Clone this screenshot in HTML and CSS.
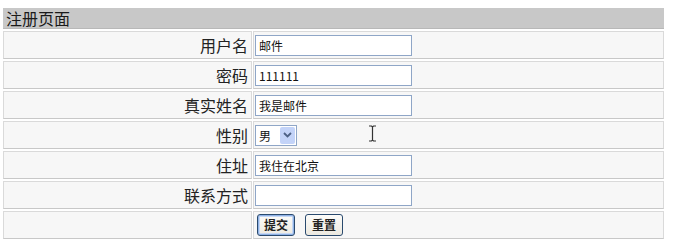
FILE: index.html
```html
<!DOCTYPE html>
<html lang="zh">
<head>
<meta charset="utf-8">
<title>注册页面</title>
<link rel="stylesheet" href="styles.css">
</head>
<body>
<div class="page">
  <div class="title">注册页面</div>
  <form class="form">
    <div class="row">
      <label class="lab">用户名</label>
      <div class="val"><input class="txt" type="text" value="邮件"></div>
    </div>
    <div class="row">
      <label class="lab">密码</label>
      <div class="val"><input class="txt" type="text" value="111111"></div>
    </div>
    <div class="row">
      <label class="lab">真实姓名</label>
      <div class="val"><input class="txt" type="text" value="我是邮件"></div>
    </div>
    <div class="row">
      <label class="lab">性别</label>
      <div class="val">
        <span class="sel">
          <select class="sel-in"><option>男</option><option>女</option></select>
          <span class="sel-btn"><svg width="9" height="6" viewBox="0 0 9 6"><path d="M1 1 L4.5 4.5 L8 1" fill="none" stroke="#4d6185" stroke-width="1.8"/></svg></span>
        </span>
        <span class="cursor"><svg width="9" height="17" viewBox="0 0 9 17"><path d="M1 1 H3.5 L4.5 2 L5.5 1 H8 M4.5 2 V15 M1 16 H3.5 L4.5 15 L5.5 16 H8" fill="none" stroke="#333" stroke-width="1.2"/></svg></span>
      </div>
    </div>
    <div class="row">
      <label class="lab">住址</label>
      <div class="val"><input class="txt" type="text" value="我住在北京"></div>
    </div>
    <div class="row">
      <label class="lab">联系方式</label>
      <div class="val"><input class="txt" type="text" value=""></div>
    </div>
    <div class="row">
      <div class="lab"></div>
      <div class="val btns">
        <button class="btn btn-def" type="button">提交</button>
        <button class="btn" type="button">重置</button>
      </div>
    </div>
  </form>
</div>
</body>
</html>
```
FILE: styles.css
```css
html, body {
  margin: 0;
  padding: 0;
  background: #ffffff;
}
body {
  font-family: "Noto Sans CJK SC", "Liberation Sans", sans-serif;
  color: #222;
}
.page {
  padding: 8px 0 0 3px;
  width: 661px;
}
.title {
  height: 21px;
  background: #c8c8c8;
  font-size: 16px;
  line-height: 21px;
  padding-left: 3px;
  color: #1a1a1a;
  border-bottom: 1px solid #b8b8b8;
  box-sizing: border-box;
}
.form {
  display: flex;
  flex-direction: column;
  gap: 2px;
  padding-top: 2px;
}
.row {
  display: grid;
  grid-template-columns: 249px 1fr;
  gap: 1px;
  height: 28px;
}
.lab, .val {
  background: #f7f7f7;
  border: 1px solid #dadada;
  border-bottom-color: #c8c8c8;
  box-sizing: border-box;
  display: flex;
  align-items: center;
  position: relative;
}
.lab {
  justify-content: flex-end;
  padding-right: 3px;
  font-size: 16px;
  color: #222;
}
.val {
  padding-left: 1px;
}
.txt {
  width: 157px;
  height: 21px;
  box-sizing: border-box;
  border: 1px solid #8fa6c7;
  background: #fff;
  font-family: "Noto Sans CJK SC", "Liberation Sans", sans-serif;
  font-size: 12px;
  padding: 0 3px;
  margin: 0;
  color: #111;
  outline: none;
}
.sel {
  display: inline-flex;
  align-items: center;
  height: 21px;
  width: 42px;
  box-sizing: border-box;
  border: 1px solid #8fa6c7;
  background: #fff;
}
.sel-in {
  appearance: none;
  -webkit-appearance: none;
  border: none;
  background: transparent;
  font-family: "Noto Sans CJK SC", sans-serif;
  font-size: 12px;
  padding: 0 0 0 3px;
  margin: 0;
  width: 23px;
  height: 19px;
  outline: none;
  color: #111;
}
.sel-btn {
  width: 15px;
  height: 17px;
  margin-left: 1px;
  background: #c3d3f8;
  border-radius: 2px;
  display: flex;
  align-items: center;
  justify-content: center;
}
.cursor {
  position: absolute;
  left: 114px;
  top: 3px;
  display: block;
  line-height: 0;
}
.btns {
  gap: 10px;
  padding-left: 3px;
}
.btn {
  height: 22px;
  width: 38px;
  box-sizing: border-box;
  border: 1px solid #2a4a6e;
  border-radius: 3px;
  background: linear-gradient(#fcfcfa, #ece9e0);
  font-family: "Noto Sans CJK SC", sans-serif;
  font-size: 12px;
  font-weight: bold;
  color: #222;
  padding: 0;
  margin: 0;
  line-height: 20px;
}
.btn-def {
  box-shadow: inset 0 0 0 1px #8fb2e6, inset 0 0 0 2px #c7d8f3;
}
```
